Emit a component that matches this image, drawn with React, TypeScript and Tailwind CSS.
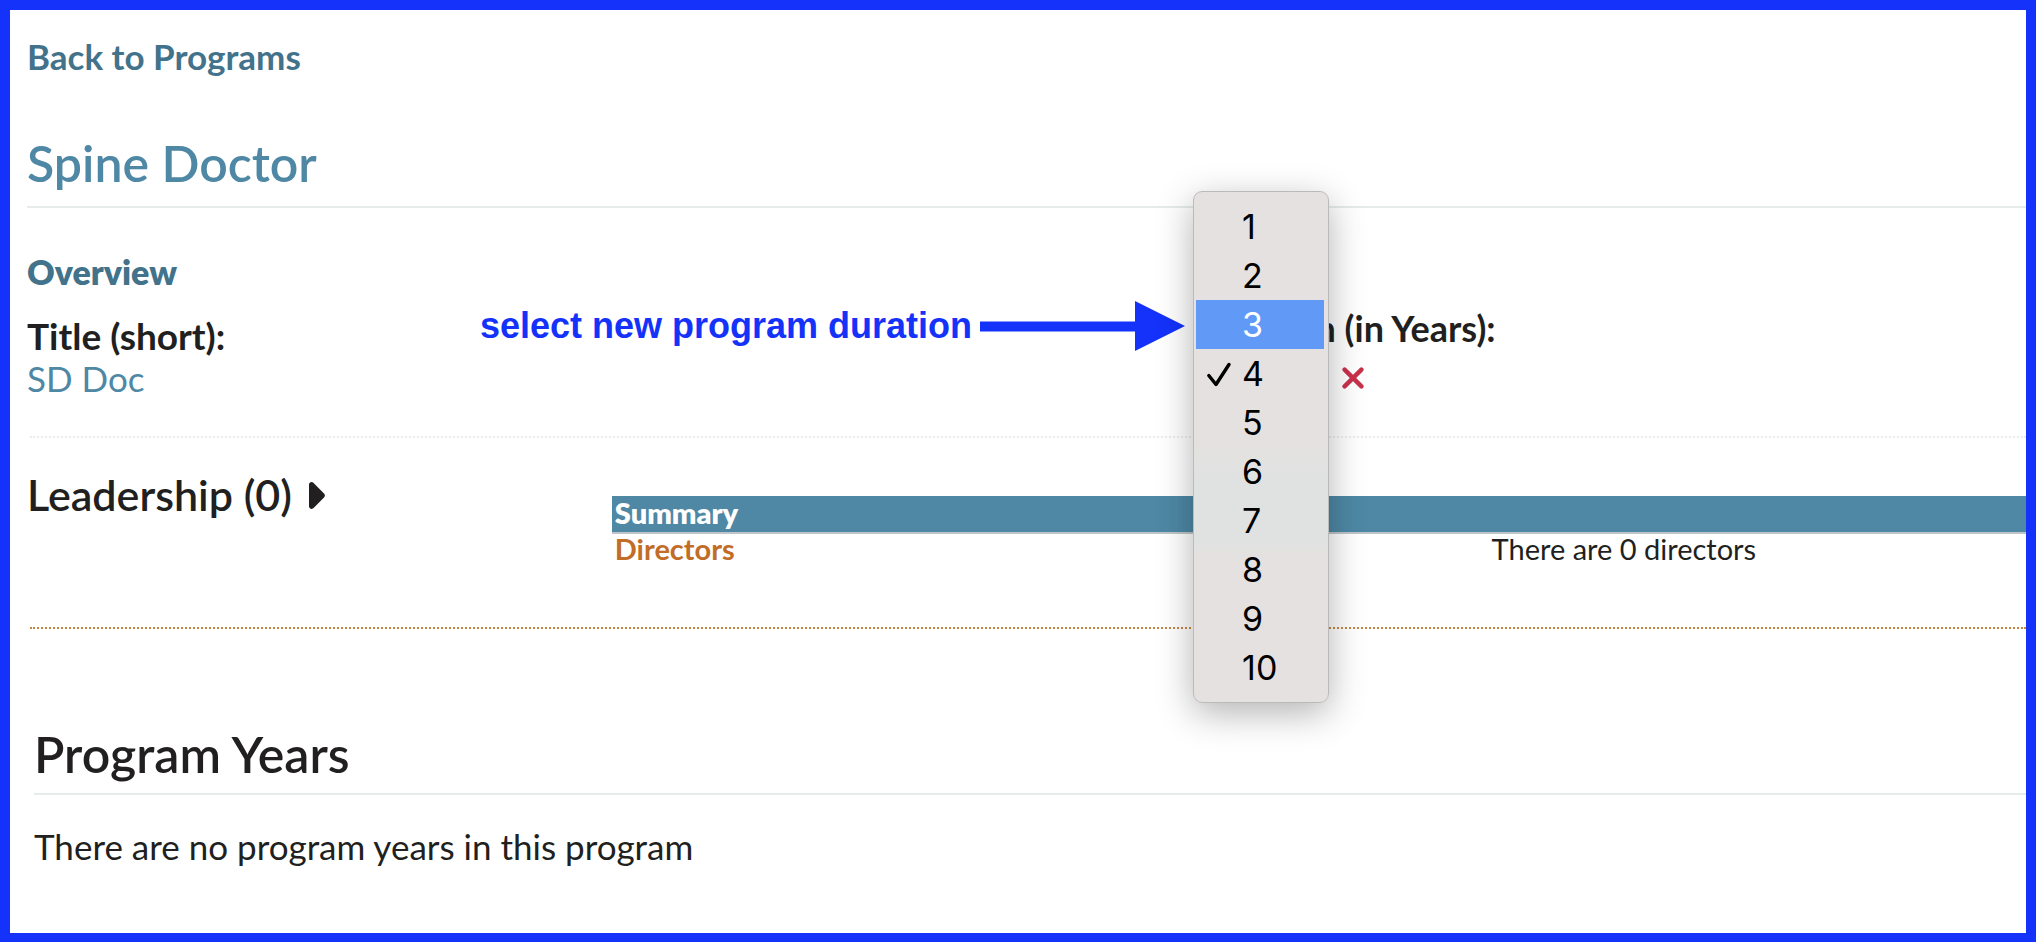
import { useState } from 'react';

const years = [1, 2, 3, 4, 5, 6, 7, 8, 9, 10];

function Annotation() {
  return (
    <div className="pointer-events-none absolute -top-1 right-full mr-2 flex items-center gap-2 whitespace-nowrap text-[#1432fa]">
      <span className="font-['Liberation_Sans',Arial,sans-serif] text-[36px] leading-[50px] font-bold">
        select new program duration
      </span>
      <svg className="h-[50px] w-[205px]" viewBox="0 0 205 50" fill="currentColor" aria-hidden="true">
        <path d="M0 20.5H155V0L205 25L155 50V30.5H0Z" />
      </svg>
    </div>
  );
}

function DurationMenu({ value, active, onPick }: { value: number; active: number; onPick: (n: number) => void }) {
  return (
    <div
      role="listbox"
      aria-label="Duration (in Years)"
      className="absolute -top-[114px] left-0 z-10 w-[136px] rounded-[9px] border border-[#b9bab9] bg-[linear-gradient(to_bottom,#e5e1e0_46%,#dfe2e1_58%,#dfe2e1_68%,#e5e1e0_73%)] pt-[10px] pr-1 pb-[10px] pl-[2px] font-['Inter',sans-serif] text-[34px] leading-[49px] text-black shadow-[0_10px_36px_rgba(0,0,0,0.3)]"
    >
      {years.map((n) => (
        <button
          key={n}
          type="button"
          role="option"
          aria-selected={n === value}
          onClick={() => onPick(n)}
          className={`flex h-[49px] w-full items-center ${n === active ? 'bg-[#6199f7] text-white' : ''}`}
        >
          <span className="flex w-[46px] shrink-0 pl-[10px]">
            {n === value && (
              <svg className="h-[26px] w-[26px]" viewBox="0 0 26 26" fill="none" stroke="currentColor" strokeWidth="3.4" strokeLinecap="round" strokeLinejoin="round" aria-hidden="true">
                <path d="M2.8 14.5L10 23.5L23 3.5" />
              </svg>
            )}
          </span>
          {n}
        </button>
      ))}
    </div>
  );
}

export default function App() {
  const [duration, setDuration] = useState(4);

  return (
    <div className="min-h-screen overflow-hidden border-[10px] border-b-[9px] border-[#1432fa] bg-white pt-[25px] pl-[17px] font-['Lato',sans-serif] text-[35px] leading-[42px] text-[#211f20]">
      <nav>
        <a href="#programs" className="font-bold text-[#42738b]">Back to Programs</a>
      </nav>

      <header className="mt-[56px] border-b-2 border-[#e6ecea] pb-[13px]">
        <h1 className="text-[50px] leading-[60px] font-semibold text-[#4e88a5]">Spine Doctor</h1>
      </header>

      <section>
        <h2 className="mt-[43px] text-[34px] font-extrabold text-[#42738b]">Overview</h2>
        <div className="mt-3 grid grid-cols-[7fr_5fr] pb-[37px]">
          <div className="flex flex-col items-start pt-[10px]">
            <span className="text-[37px] font-bold">Title (short):</span>
            <button type="button" className="text-[#4e88a5]">SD Doc</button>
          </div>
          <div className="relative pt-[2px]">
            <label htmlFor="duration" className="block text-[36px] font-bold">Duration (in Years):</label>
            <div className="mt-2 flex items-center">
              <select
                id="duration"
                value={duration}
                onChange={(e) => setDuration(Number(e.target.value))}
                className="h-[42px] w-[132px] text-[28px]"
              >
                {years.map((n) => (
                  <option key={n} value={n}>{n}</option>
                ))}
              </select>
              <button type="button" aria-label="Cancel" className="ml-[17px] text-[#c8324b]">
                <svg className="h-[22px] w-[22px]" viewBox="0 0 22 22" fill="none" stroke="currentColor" strokeWidth="4.4" strokeLinecap="round" aria-hidden="true">
                  <path d="M2.6 2.6L19.4 19.4M19.4 2.6L2.6 19.4" />
                </svg>
              </button>
            </div>
            <DurationMenu value={duration} active={3} onPick={setDuration} />
            <Annotation />
          </div>
        </div>
      </section>

      <section className="ml-[3px]">
        <div className="border-t-2 border-dotted border-[#ececec]" />
        <div className="flex items-start border-b-2 border-dotted border-[#c68642] pb-[63px]">
          <h2 className="-ml-[3px] w-[29.3%] shrink-0 pt-8">
            <button type="button" className="flex items-center gap-[17px] text-[43px] leading-[50px] font-semibold">
              Leadership (0)
              <svg className="h-[27px] w-4" viewBox="0 0 16 27" fill="currentColor" aria-hidden="true">
                <path d="M0 2.8C0 .4 2.8-.8 4.6.9L15 11.4C16.2 12.6 16.2 14.4 15 15.6L4.6 26.1C2.8 27.8 0 26.6 0 24.2Z" />
              </svg>
            </button>
          </h2>
          <table className="mt-[58px] grow table-fixed border-collapse text-left text-[29px] leading-[30px]">
            <colgroup>
              <col className="w-[62%]" />
              <col />
            </colgroup>
            <thead>
              <tr className="bg-[#4e88a5] text-white">
                <th colSpan={2} className="px-[3px] pt-[2px] pb-1 font-extrabold">Summary</th>
              </tr>
            </thead>
            <tbody>
              <tr className="border-t-2 border-[#bfc5c8]">
                <td className="px-[3px] font-bold text-[#c16d27]">Directors</td>
                <td className="px-[3px]">There are 0 directors</td>
              </tr>
            </tbody>
          </table>
        </div>
      </section>

      <section className="mt-[95px] ml-[7px]">
        <h2 className="border-b-2 border-[#e6ecea] pb-[9px] text-[50px] leading-[60px] font-semibold">Program Years</h2>
        <p className="mt-[30px]">There are no program years in this program</p>
      </section>
    </div>
  );
}
